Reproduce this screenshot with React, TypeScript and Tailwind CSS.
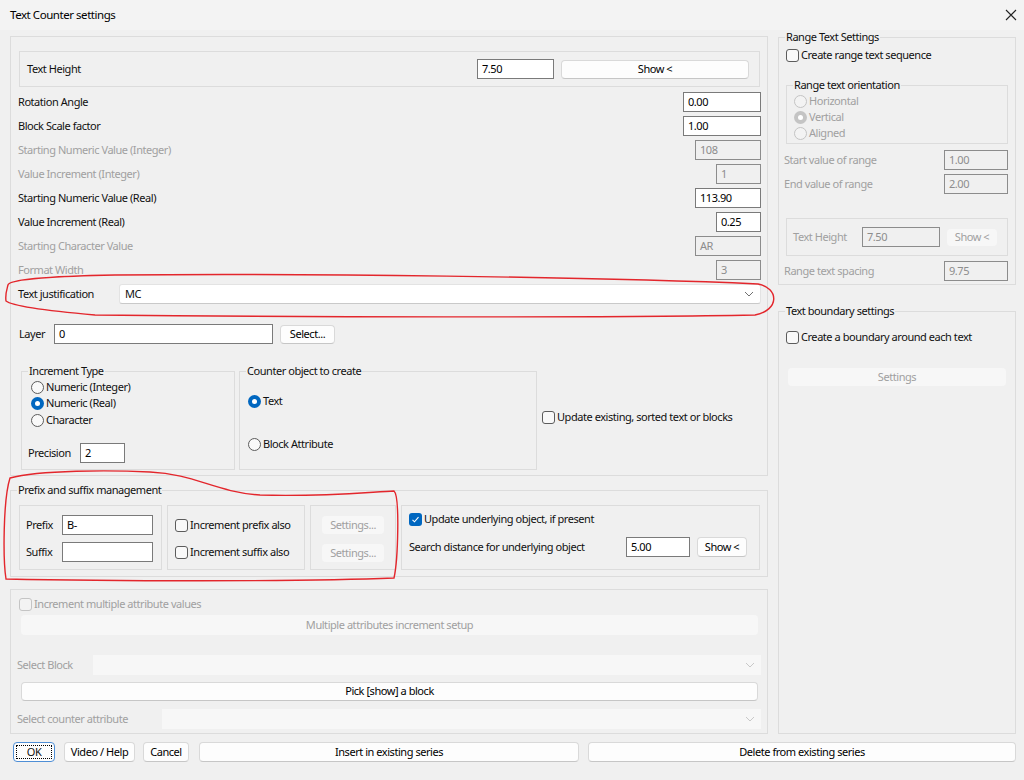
import type { FC, ReactNode } from "react";

type BoxProps = { children?: ReactNode; className?: string };

const Input: FC<{ value?: string; className?: string; disabled?: boolean }> = ({
  value = "",
  className = "",
  disabled,
}) => (
  <div
    className={`flex h-[20px] shrink-0 items-center border px-[4px] ${
      disabled
        ? "border-[#8c8c8c] bg-[#f0f0f0] text-[#8d8d8d]"
        : "border-[#7a7a7a] bg-white text-black"
    } ${className}`}
  >
    {value}
  </div>
);

const Btn: FC<{
  children: ReactNode;
  className?: string;
  disabled?: boolean;
  focused?: boolean;
}> = ({ children, className = "", disabled, focused }) => {
  if (focused) {
    return (
      <div
        className={`flex shrink-0 items-center justify-center rounded-[4px] border border-[#4f8fd6] bg-[#fdfdfd] p-[2px] ${className}`}
      >
        <div className="flex h-full w-full items-center justify-center border border-dotted border-black">
          {children}
        </div>
      </div>
    );
  }
  return (
    <div
      className={`flex shrink-0 items-center justify-center rounded-[4px] ${
        disabled
          ? "bg-[#f7f7f7] text-[#a0a0a0]"
          : "border border-[#d9d9d9] border-b-[#c6c6c6] bg-[#fdfdfd] text-black"
      } ${className}`}
    >
      {children}
    </div>
  );
};

const Chevron: FC<{ light?: boolean }> = ({ light }) => (
  <svg
    width="10"
    height="6"
    viewBox="0 0 10 6"
    className={light ? "text-[#c8c8c8]" : "text-[#707070]"}
  >
    <polyline
      points="1,1 5,5 9,1"
      fill="none"
      stroke="currentColor"
      strokeWidth="1"
    />
  </svg>
);

const Select: FC<{ value?: string; className?: string; disabled?: boolean }> = ({
  value = "",
  className = "",
  disabled,
}) => (
  <div
    className={`flex h-[20px] shrink-0 items-center justify-between pl-[5px] pr-[6px] ${
      disabled
        ? "bg-[#f7f7f7]"
        : "rounded-[3px] border border-[#e3e3e3] border-b-[#c9c9c9] bg-white"
    } ${className}`}
  >
    <span>{value}</span>
    <Chevron light={disabled} />
  </div>
);

const Check: FC<{ label: string; checked?: boolean; disabled?: boolean; className?: string }> = ({
  label,
  checked,
  disabled,
  className = "",
}) => (
  <div className={`flex items-center ${className}`}>
    {checked ? (
      <span className="flex size-[13px] items-center justify-center rounded-[3px] bg-[#0067c0]">
        <svg width="9" height="9" viewBox="0 0 9 9">
          <polyline
            points="1.5,4.8 3.5,6.8 7.5,2.2"
            fill="none"
            stroke="white"
            strokeWidth="1.1"
          />
        </svg>
      </span>
    ) : (
      <span
        className={`size-[13px] rounded-[3px] border ${
          disabled ? "border-[#c4c4c4] bg-[#f3f3f3]" : "border-[#5c5c5c] bg-[#f9f9f9]"
        }`}
      />
    )}
    <span className={`ml-[2px] ${disabled ? "text-[#a0a0a0]" : "text-[#111]"}`}>{label}</span>
  </div>
);

const Radio: FC<{ label: string; checked?: boolean; disabled?: boolean; className?: string }> = ({
  label,
  checked,
  disabled,
  className = "",
}) => (
  <div className={`flex items-center ${className}`}>
    {checked ? (
      <span
        className={`flex size-[13px] items-center justify-center rounded-full ${
          disabled ? "bg-[#c4c4c4]" : "bg-[#0067c0]"
        }`}
      >
        <span className="size-[5px] rounded-full bg-white" />
      </span>
    ) : (
      <span
        className={`size-[13px] rounded-full border ${
          disabled ? "border-[#c4c4c4] bg-[#f3f3f3]" : "border-[#5c5c5c] bg-[#f9f9f9]"
        }`}
      />
    )}
    <span className={`ml-[2px] ${disabled ? "text-[#a0a0a0]" : "text-[#111]"}`}>{label}</span>
  </div>
);

// fieldset keeps the legend on the border line; padding goes on the inner div
const Group: FC<BoxProps & { title: string; bodyClassName?: string }> = ({
  title,
  children,
  className = "",
  bodyClassName = "",
}) => (
  <fieldset className={`border border-[#dcdcdc] ${className}`}>
    <legend className="ml-[6px] px-[1px] leading-[14px] text-[#111]">{title}</legend>
    <div className={`flex flex-col ${bodyClassName}`}>{children}</div>
  </fieldset>
);

const Row: FC<BoxProps & { label: string; disabled?: boolean }> = ({
  label,
  disabled,
  children,
  className = "",
}) => (
  <div className={`flex h-[24px] items-center justify-between ${className}`}>
    <span className={disabled ? "text-[#a0a0a0]" : "text-[#111]"}>{label}</span>
    {children}
  </div>
);

const Annotations = () => (
  <svg
    className="pointer-events-none absolute left-0 top-0"
    width="1024"
    height="780"
    viewBox="0 0 1024 780"
  >
    <path
      d="M 8 285 C 9 279 60 276 115 275 C 300 273 600 277 758 284 C 779 288 780 310 755 315 C 600 318 300 317 95 315 C 50 311 12 306 6 301 C 5 294 7 289 8 285 Z"
      fill="none"
      stroke="#e3262c"
      strokeWidth="1.4"
    />
    <path
      d="M 10 478 C 40 470 110 470 150 472 C 195 474 215 492 260 495 C 320 497 370 492 394 491 C 400 496 398 560 394 578 C 300 582 100 581 6 579 C 3 560 3 500 10 478 Z"
      fill="none"
      stroke="#e3262c"
      strokeWidth="1.4"
    />
  </svg>
);

export default function App() {
  return (
    <div className="relative h-[780px] w-[1024px] overflow-hidden bg-[#f0f0f0] font-['Noto_Sans',sans-serif] text-[11px] tracking-[-0.45px] text-[#111]">
      <div className="flex h-[30px] items-center justify-between bg-[#f3f3f3] pl-[10px] pr-[7px]">
        <span className="text-[11.5px] text-black">Text Counter settings</span>
        <svg width="12" height="12" viewBox="0 0 12 12">
          <path d="M1 1 L11 11 M11 1 L1 11" stroke="#222" strokeWidth="1.1" />
        </svg>
      </div>

      <div className="flex gap-[10px] pl-[10px] pr-[8px]">
        {/* left column */}
        <div className="flex w-[758px] flex-col">
          <div className="mt-[6px] flex h-[440px] flex-col border border-[#dcdcdc] pl-[7px] pr-[6px] pt-[14px]">
            <div className="mx-[1px] flex h-[36px] items-center border border-[#dcdcdc] pl-[7px] pr-[10px]">
              <span className="flex-1">Text Height</span>
              <Input value="7.50" className="w-[77px]" />
              <Btn className="ml-[7px] h-[19px] w-[188px]">Show &lt;</Btn>
            </div>

            <div className="mt-[3px] flex flex-col">
              <Row label="Rotation Angle">
                <Input value="0.00" className="w-[78px]" />
              </Row>
              <Row label="Block Scale factor">
                <Input value="1.00" className="w-[78px]" />
              </Row>
              <Row label="Starting Numeric Value (Integer)" disabled>
                <Input value="108" className="w-[66px]" disabled />
              </Row>
              <Row label="Value Increment (Integer)" disabled>
                <Input value="1" className="w-[45px]" disabled />
              </Row>
              <Row label="Starting Numeric Value (Real)">
                <Input value="113.90" className="w-[66px]" />
              </Row>
              <Row label="Value Increment (Real)">
                <Input value="0.25" className="w-[45px]" />
              </Row>
              <Row label="Starting Character Value" disabled>
                <Input value="AR" className="w-[66px]" disabled />
              </Row>
              <Row label="Format Width" disabled>
                <Input value="3" className="w-[45px]" disabled />
              </Row>
              <Row label="Text justification">
                <Select value="MC" className="w-[642px]" />
              </Row>
            </div>

            <div className="mt-[16px] flex h-[24px] items-center pl-[1px]">
              <span className="w-[35px]">Layer</span>
              <Input value="0" className="w-[219px]" />
              <Btn className="ml-[7px] h-[19px] w-[55px]">Select...</Btn>
            </div>

            <div className="mt-[18px] flex items-center">
              <Group title="Increment Type" className="ml-[3px] h-[106px] w-[214px]">
                <Radio label="Numeric (Integer)" className="ml-[9px] mt-[1px] h-[16px]" />
                <Radio label="Numeric (Real)" checked className="ml-[9px] h-[17px]" />
                <Radio label="Character" className="ml-[9px] h-[16px]" />
                <div className="mt-[15px] flex h-[20px] items-center pl-[6px]">
                  <span className="w-[52px]">Precision</span>
                  <Input value="2" className="w-[45px]" />
                </div>
              </Group>
              <Group title="Counter object to create" className="ml-[4px] h-[106px] w-[298px]">
                <Radio label="Text" checked className="ml-[8px] mt-[15px] h-[16px]" />
                <Radio label="Block Attribute" className="ml-[8px] mt-[27px] h-[16px]" />
              </Group>
              <Check label="Update existing, sorted text or blocks" className="ml-[5px]" />
            </div>
          </div>

          <Group
            title="Prefix and suffix management"
            className="mt-[7px] h-[94px]"
            bodyClassName="pl-[8px]"
          >
            <div className="mt-[8px] flex">
              <div className="flex h-[65px] w-[143px] flex-col border border-[#dcdcdc] pl-[6px] pt-[9px]">
                <div className="flex h-[20px] items-center">
                  <span className="w-[36px]">Prefix</span>
                  <Input value="B-" className="w-[91px]" />
                </div>
                <div className="mt-[7px] flex h-[20px] items-center">
                  <span className="w-[36px]">Suffix</span>
                  <Input className="w-[91px]" />
                </div>
              </div>
              <div className="ml-[5px] flex h-[65px] w-[138px] flex-col border border-[#dcdcdc] pl-[7px] pt-[9px]">
                <Check label="Increment prefix also" className="h-[20px]" />
                <Check label="Increment suffix also" className="mt-[7px] h-[20px]" />
              </div>
              <div className="ml-[5px] flex h-[65px] w-[86px] flex-col border border-[#dcdcdc] pl-[11px] pt-[10px]">
                <Btn disabled className="h-[18px] w-[62px]">Settings...</Btn>
                <Btn disabled className="mt-[10px] h-[18px] w-[62px]">Settings...</Btn>
              </div>
              <div className="ml-[5px] flex h-[65px] w-[359px] flex-col border border-[#dcdcdc] pl-[7px] pr-[12px] pt-[5px]">
                <Check label="Update underlying object, if present" checked className="h-[16px]" />
                <div className="mt-[10px] flex h-[20px] items-center">
                  <span className="flex-1">Search distance for underlying object</span>
                  <Input value="5.00" className="w-[64px]" />
                  <Btn className="ml-[7px] h-[20px] w-[50px]">Show &lt;</Btn>
                </div>
              </div>
            </div>
          </Group>

          <div className="mt-[12px] flex h-[145px] flex-col border border-[#dcdcdc] px-[6px] pt-[6px]">
            <Check
              label="Increment multiple attribute values"
              disabled
              className="ml-[2px] h-[16px]"
            />
            <Btn disabled className="ml-[4px] mt-[3px] h-[20px] w-[737px]">
              Multiple attributes increment setup
            </Btn>
            <div className="mt-[20px] flex h-[20px] items-center justify-between">
              <span className="text-[#a0a0a0]">Select Block</span>
              <Select disabled className="w-[668px]" />
            </div>
            <Btn className="ml-[4px] mt-[7px] h-[19px] w-[737px]">Pick [show] a block</Btn>
            <div className="mt-[8px] flex h-[20px] items-center justify-between">
              <span className="text-[#a0a0a0]">Select counter attribute</span>
              <Select disabled className="w-[599px]" />
            </div>
          </div>
        </div>

        {/* right column */}
        <div className="flex w-[238px] flex-col">
          <Group title="Range Text Settings" className="h-[255px]" bodyClassName="pl-[5px] pr-[7px]">
            <Check label="Create range text sequence" className="ml-[2px] mt-[3px] h-[16px]" />
            <Group
              title="Range text orientation"
              className="ml-[2px] mt-[15px] h-[66px] w-[222px]"
              bodyClassName="pl-[7px]"
            >
              <Radio label="Horizontal" disabled className="mt-[1px] h-[16px]" />
              <Radio label="Vertical" disabled checked className="h-[16px]" />
              <Radio label="Aligned" disabled className="h-[17px]" />
            </Group>
            <div className="mt-[6px] flex h-[20px] items-center justify-between">
              <span className="text-[#a0a0a0]">Start value of range</span>
              <Input value="1.00" disabled className="w-[64px]" />
            </div>
            <div className="mt-[4px] flex h-[20px] items-center justify-between">
              <span className="text-[#a0a0a0]">End value of range</span>
              <Input value="2.00" disabled className="w-[64px]" />
            </div>
            <div className="ml-[2px] mt-[24px] flex h-[38px] w-[222px] items-center border border-[#dcdcdc] pl-[6px]">
              <span className="w-[69px] text-[#a0a0a0]">Text Height</span>
              <Input value="7.50" disabled className="w-[78px]" />
              <Btn disabled className="ml-[7px] h-[17px] w-[50px]">Show &lt;</Btn>
            </div>
            <div className="mt-[5px] flex h-[20px] items-center justify-between">
              <span className="text-[#a0a0a0]">Range text spacing</span>
              <Input value="9.75" disabled className="w-[64px]" />
            </div>
          </Group>

          <Group title="Text boundary settings" className="mt-[19px] h-[430px]" bodyClassName="pl-[7px]">
            <Check label="Create a boundary around each text" className="mt-[11px] h-[16px]" />
            <Btn disabled className="ml-[2px] mt-[23px] h-[18px] w-[218px]">Settings</Btn>
          </Group>
        </div>
      </div>

      <div className="mt-[8px] flex pl-[13px]">
        <Btn focused className="h-[20px] w-[42px]">OK</Btn>
        <Btn className="ml-[9px] h-[20px] w-[71px]">Video / Help</Btn>
        <Btn className="ml-[8px] h-[20px] w-[46px]">Cancel</Btn>
        <Btn className="ml-[10px] h-[20px] w-[380px]">Insert in existing series</Btn>
        <Btn className="ml-[9px] h-[20px] w-[428px]">Delete from existing series</Btn>
      </div>

      <Annotations />
    </div>
  );
}
